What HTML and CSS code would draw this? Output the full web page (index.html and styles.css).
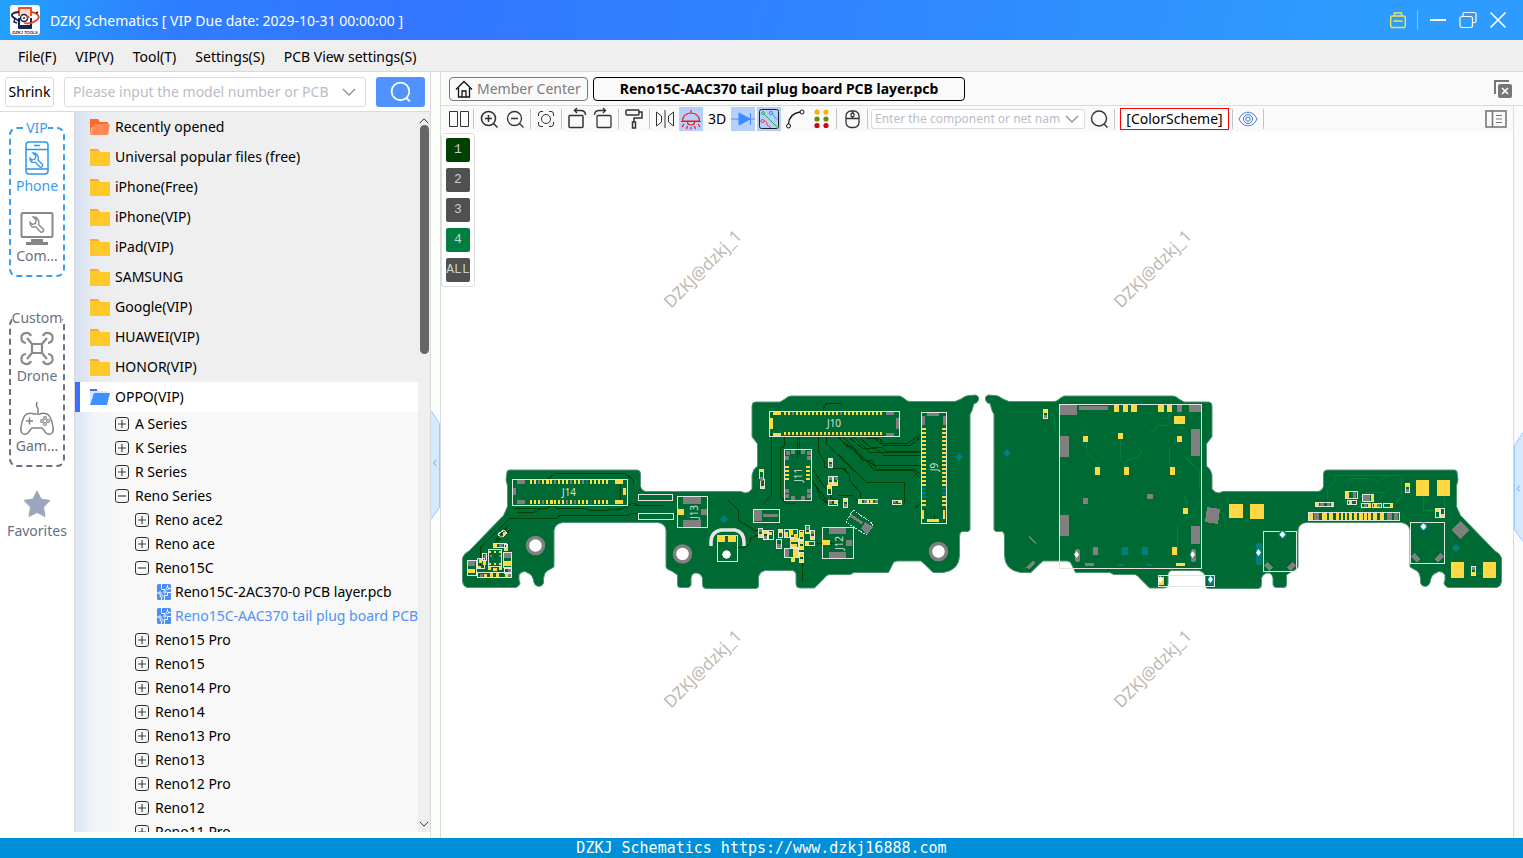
FILE: index.html
```html
<!DOCTYPE html>
<html lang="en">
<head>
<meta charset="utf-8">
<meta name="viewport" content="width=device-width, initial-scale=1">
<title>DZKJ Schematics</title>
<link rel="stylesheet" href="styles.css">
</head>
<body>
<svg class="sprite" aria-hidden="true">
  <symbol id="folder" viewBox="0 0 20 18"><path fill="#ffa82b" d="M0 1h8l2 3h10v4H0z"/><path fill="#ffc929" d="M0 3h8l1 1h11v14H0z"/></symbol>
  <symbol id="folder-recent" viewBox="0 0 20 18"><path fill="#ff6a2c" d="M0 1h8l2 3h8v5H2L0 16z"/><path fill="#ff8a58" d="M4 6h16l-2 11H0z"/></symbol>
  <symbol id="folder-open" viewBox="0 0 20 18"><path fill="#dbe5ff" d="M0 2h8l2 1h7v6H2L0 16z"/><path fill="#3c6cf0" d="M0 1h7v2H0z"/><path fill="#3d91ff" d="M4 5h16l-3 12H0z"/></symbol>
  <symbol id="plus" viewBox="0 0 14 14"><rect x=".5" y=".5" width="13" height="13" rx="2.5" fill="none" stroke="#333"/><path d="M3 7h8M7 3v8" stroke="#444" stroke-width="1.2"/></symbol>
  <symbol id="minus" viewBox="0 0 14 14"><rect x=".5" y=".5" width="13" height="13" rx="2.5" fill="none" stroke="#333"/><path d="M3 7h8" stroke="#444" stroke-width="1.2"/></symbol>
  <symbol id="pcb" viewBox="0 0 14 16"><rect width="14" height="16" rx="1.500" fill="#4a8ff8"/><path d="M4.500 0v4.500M4.500 5.500H8v3M10.500 1v3.500H14M0 9h3M4.500 13.500V16M7.500 16v-4.500h3V8.500H14" fill="none" stroke="#fff"/><g fill="#4a8ff8" stroke="#fff" stroke-width=".9"><circle cx="4.500" cy="12" r="1.400"/><circle cx="3" cy="9" r="1.200"/><circle cx="8" cy="8" r="1.200"/><circle cx="10.500" cy="4.500" r="1.200"/></g></symbol>
  <symbol id="chevron" viewBox="0 0 14 8"><path d="M1 1l6 6 6-6" fill="none" stroke="currentColor" stroke-width="1.4"/></symbol>
  <symbol id="search" viewBox="0 0 20 20"><circle cx="9.500" cy="9.500" r="8" fill="none" stroke="currentColor" stroke-width="1.6"/><path d="M14.500 15l3.500 3.500" stroke="currentColor" stroke-width="1.8"/></symbol>
  <symbol id="wrench" viewBox="0 0 16 16"><path d="M4 1l3 3-1 3-3 1-2-2c0 4 2 5 5 4l5 5c1 1 4-1 2-3l-4-4c1-4-1-7-5-7z" fill="none" stroke="currentColor" stroke-width="1.300"/></symbol>
</svg>

<header class="titlebar">
  <svg class="logo" viewBox="0 0 30 30" aria-label="DZKJ Tools" role="img">
    <rect width="30" height="30" rx="3" fill="#fff"/>
    <path d="M9 2h12q1 0 1 1v8H8V3q0-1 1-1z" fill="#f4491d"/><rect x="10" y="4" width="10" height="6" fill="#ffd9c4"/>
    <path d="M8 13h14v10q0 1-1 1H9q-1 0-1-1z" fill="#152450"/><rect x="10" y="10" width="10" height="10" fill="#fff"/>
    <circle cx="14" cy="13" r="3.500" fill="none" stroke="#16264e" stroke-width="1.500"/><circle cx="18" cy="12" r="1.600" fill="#e94121"/><circle cx="14" cy="13" r="1" fill="#16264e"/>
    <path d="M9 7C3 7 0 10 3 12c2 2 6 3 6 5" fill="none" stroke="#16264e" stroke-width="1.800"/>
    <path d="M21 7c7 1 10 5 6 8s-9 4-13 3" fill="none" stroke="#ee4721" stroke-width="1.800"/>
    <path d="M5 13l-1 4 3 1M26 8l2-1" fill="none" stroke="#16264e" stroke-width="1.400"/>
    <text x="15" y="28.500" text-anchor="middle" class="logo-text">DZKJ TOOLS</text>
  </svg>
  <h1 class="title">DZKJ Schematics [ VIP Due date: 2029-10-31 00:00:00 ]</h1>
  <button class="win-btn win-case" aria-label="Toolbox"><svg width="16" height="18" viewBox="0 0 16 18" fill="none" stroke="#f3e34b" stroke-width="1.400"><rect x=".7" y="5" width="14.600" height="11.500" rx="1.500"/><path d="M4.500 5V2h7v3M3.500 10h9"/></svg></button>
  <span class="win-line"></span>
  <button class="win-btn" aria-label="Minimize"><svg width="18" height="18" viewBox="0 0 18 18"><path d="M1 9h16" stroke="#fff" stroke-width="2"/></svg></button>
  <button class="win-btn" aria-label="Restore"><svg width="18" height="18" viewBox="0 0 18 18" fill="none" stroke="#fff" stroke-width="1.200"><rect x="1" y="5.500" width="12.500" height="11" rx="2"/><path d="M4 5V3q0-1.500 1.500-1.500h10q1.500 0 1.500 1.500v7q0 1.500-1.500 1.500H14"/></svg></button>
  <button class="win-btn" aria-label="Close"><svg width="18" height="18" viewBox="0 0 18 18"><path d="M1.500 1.500l15 15M16.500 1.500l-15 15" stroke="#fff" stroke-width="1.600"/></svg></button>
</header>

<nav class="menubar">
  <button>File(F)</button><button>VIP(V)</button><button>Tool(T)</button><button>Settings(S)</button><button>PCB View settings(S)</button>
</nav>

<div class="workspace">
  <aside class="side">
    <form class="finder">
      <button type="button" class="shrink">Shrink</button>
      <div class="combo">
        <input type="text" aria-label="Model number" placeholder="Please input the model number or PCB">
        <svg width="14" height="8"><use href="#chevron"/></svg>
      </div>
      <button type="button" class="find" aria-label="Search"><svg width="22" height="22"><use href="#search"/></svg></button>
    </form>
    <div class="side-body">
      <nav class="rail">
        <fieldset class="group group-vip">
          <legend>VIP</legend>
          <button class="rail-item"><svg width="36" height="36" viewBox="0 0 36 36" fill="none" stroke="#2b96ea" stroke-width="1.500"><rect x="7" y="2" width="22" height="32" rx="3"/><path d="M7 9.500h22M7 29h22M15 5.500h6"/><svg x="10" y="12" width="16" height="16" color="#2b96ea"><use href="#wrench"/></svg></svg><span>Phone</span></button>
          <button class="rail-item"><svg width="36" height="36" viewBox="0 0 36 36" color="#878787"><rect x="2.500" y="3" width="31" height="24" rx="1.500" fill="none" stroke="#878787" stroke-width="2"/><path d="M12 29h12v3h5v3H7v-3h5z" fill="#878787"/><svg x="10" y="6" width="17" height="17"><use href="#wrench"/></svg></svg><span>Com...</span></button>
        </fieldset>
        <fieldset class="group">
          <legend>Custom</legend>
          <button class="rail-item"><svg width="36" height="36" viewBox="0 0 36 36" fill="none" stroke="#8a8a8a" stroke-width="2.200"><path d="M12 6a5 5 0 1 0-5 7M24 6a5 5 0 1 1 5 7M12 31a5 5 0 1 1-5-7M24 31a5 5 0 1 0 5-7"/><path d="M8 8l5 6v9l-5 6M28 8l-5 6v9l5 6M13 14h10M13 23h10"/></svg><span>Drone</span></button>
          <button class="rail-item"><svg width="36" height="36" viewBox="0 0 36 36" fill="none" stroke="#828282" stroke-width="1.500"><path d="M19 13V9c0-2-3-2-1-7"/><path d="M8 14c3-1 5-1 7 0h6c2-1 4-1 7 0 3 1 5 7 6 13 1 6-2 8-5 7-3 0-3-4-6-6H13c-3 2-3 6-6 6-3 1-6-1-5-7 1-6 3-12 6-13z"/><path d="M7 21h7M10.500 17.500v7"/><g stroke-width="1.100"><circle cx="26" cy="18" r="1.400"/><circle cx="26" cy="24" r="1.400"/><circle cx="23" cy="21" r="1.400"/><circle cx="29" cy="21" r="1.400"/></g></svg><span>Gam...</span></button>
        </fieldset>
        <button class="rail-item rail-fav"><svg width="36" height="34" viewBox="0 0 36 34"><path d="M18 4l4 8 9 1.500-6.500 6.500L26 29.500 18 25.500 10 29.500 11.500 20 5 13.500 14 12z" fill="#9ba6bd" stroke="#9ba6bd" stroke-linejoin="round"/></svg><span>Favorites</span></button>
      </nav>
      <div class="tree">
        <ul class="folders">
          <li><button><svg><use href="#folder-recent"/></svg>Recently opened</button></li>
          <li><button><svg><use href="#folder"/></svg>Universal popular files (free)</button></li>
          <li><button><svg><use href="#folder"/></svg>iPhone(Free)</button></li>
          <li><button><svg><use href="#folder"/></svg>iPhone(VIP)</button></li>
          <li><button><svg><use href="#folder"/></svg>iPad(VIP)</button></li>
          <li><button><svg><use href="#folder"/></svg>SAMSUNG</button></li>
          <li><button><svg><use href="#folder"/></svg>Google(VIP)</button></li>
          <li><button><svg><use href="#folder"/></svg>HUAWEI(VIP)</button></li>
          <li><button><svg><use href="#folder"/></svg>HONOR(VIP)</button></li>
          <li><button class="open"><svg><use href="#folder-open"/></svg>OPPO(VIP)</button>
            <ul class="nodes">
              <li><button><svg><use href="#plus"/></svg>A Series</button></li>
              <li><button><svg><use href="#plus"/></svg>K Series</button></li>
              <li><button><svg><use href="#plus"/></svg>R Series</button></li>
              <li><button><svg><use href="#minus"/></svg>Reno Series</button>
                <ul>
                  <li><button><svg><use href="#plus"/></svg>Reno ace2</button></li>
                  <li><button><svg><use href="#plus"/></svg>Reno ace</button></li>
                  <li><button><svg><use href="#minus"/></svg>Reno15C</button>
                    <ul class="files">
                      <li><button><svg><use href="#pcb"/></svg>Reno15C-2AC370-0 PCB layer.pcb</button></li>
                      <li><button class="current"><svg><use href="#pcb"/></svg>Reno15C-AAC370 tail plug board PCB layer.pcb</button></li>
                    </ul>
                  </li>
                  <li><button><svg><use href="#plus"/></svg>Reno15 Pro</button></li>
                  <li><button><svg><use href="#plus"/></svg>Reno15</button></li>
                  <li><button><svg><use href="#plus"/></svg>Reno14 Pro</button></li>
                  <li><button><svg><use href="#plus"/></svg>Reno14</button></li>
                  <li><button><svg><use href="#plus"/></svg>Reno13 Pro</button></li>
                  <li><button><svg><use href="#plus"/></svg>Reno13</button></li>
                  <li><button><svg><use href="#plus"/></svg>Reno12 Pro</button></li>
                  <li><button><svg><use href="#plus"/></svg>Reno12</button></li>
                  <li><button><svg><use href="#plus"/></svg>Reno11 Pro</button></li>
                </ul>
              </li>
            </ul>
          </li>
        </ul>
        <div class="scroll">
          <svg class="up" width="10" height="6"><use href="#chevron"/></svg>
          <div class="track"><span class="thumb"></span></div>
          <svg width="10" height="6"><use href="#chevron"/></svg>
        </div>
      </div>
    </div>
  </aside>

  <button class="grip grip-left" aria-label="Collapse left panel"><svg width="9" height="110" viewBox="0 0 9 110"><path d="M0 .5l8.500 13v84L0 109.500" fill="#d6eaff" stroke="#94caff"/><path d="M5.500 50l-3 3 3 3" fill="none" stroke="#4aa5ee"/></svg></button>

  <main class="main">
    <div class="tabs">
      <button class="tab tab-home"><svg width="18" height="18" viewBox="0 0 18 18" fill="none" stroke="#111" stroke-width="1.300"><path d="M1 9.500L9 1.500l8 8M3.500 8v9h11V8M7 17v-6h4v6"/></svg>Member Center</button>
      <button class="tab tab-active">Reno15C-AAC370 tail plug board PCB layer.pcb</button>
      <button class="close-all" aria-label="Close all"><svg width="18" height="18" viewBox="0 0 18 18"><path d="M1 14V1h14" fill="none" stroke="#777" stroke-width="2"/><rect x="4" y="4" width="14" height="14" rx="2" fill="#777"/><path d="M8 8l6 6M14 8l-6 6" stroke="#fff" stroke-width="1.600"/></svg></button>
    </div>
    <div class="below">
      <div class="view">
        <div class="toolbar">
          <button class="tool" aria-label="Split view"><svg viewBox="0 0 24 24"><path d="M3.500 4.500h8v15h-8zM14.500 4.500h8v15h-8z"/></svg></button>
          <i class="sep"></i>
          <button class="tool" aria-label="Zoom in"><svg viewBox="0 0 24 24"><g stroke-width="1.600"><circle cx="11.500" cy="11.500" r="7"/><path d="M16.500 16.500l4 4M8 11.500h7M11.500 8v7"/></g></svg></button>
          <button class="tool" aria-label="Zoom out"><svg viewBox="0 0 24 24"><g stroke-width="1.300"><circle cx="11.500" cy="11.500" r="7"/><path d="M16.500 16.500l4 4M8 11.500h7"/></g></svg></button>
          <i class="sep"></i>
          <button class="tool" aria-label="Fit to view"><svg viewBox="0 0 24 24"><circle cx="12" cy="12" r="4.500"/><path d="M4.500 9V7q0-2.500 2.500-2.500h2M15 4.500h2q2.500 0 2.500 2.500v2M19.500 15v2q0 2.500-2.500 2.500h-2M9 19.500H7q-2.500 0-2.500-2.500v-2"/></svg></button>
          <i class="sep"></i>
          <button class="tool" aria-label="Rotate left"><svg viewBox="0 0 24 24"><g stroke-width="1.500"><rect x="4" y="8.500" width="14" height="12" rx="1"/><path d="M20.500 8c0-3-2-4.500-5-4.500H9.500M12 1L9.500 3.500 12 6"/></g></svg></button>
          <button class="tool" aria-label="Rotate right"><svg viewBox="0 0 24 24"><g stroke-width="1.300"><rect x="6" y="8.500" width="14" height="12" rx="1"/><path d="M3.500 8c0-3 2-4.500 5-4.500h6M12 1l2.500 2.500L12 6"/></g></svg></button>
          <i class="sep"></i>
          <button class="tool" aria-label="Paint"><svg viewBox="0 0 24 24"><g stroke-width="1.500"><rect x="4" y="3" width="13" height="5" rx="1"/><path d="M17 5h3v6h-8v4"/><rect x="10.500" y="15" width="3" height="6"/></g></svg></button>
          <i class="sep"></i>
          <button class="tool" aria-label="Mirror"><svg viewBox="0 0 24 24"><path d="M3.500 5v14l5-4V9zM20.500 5v14l-5-4V9zM12 3v18"/></svg></button>
          <button class="tool on" aria-label="Light"><svg viewBox="0 0 24 24"><g stroke="#f01818" stroke-width="1.200"><path d="M12 3v3M3.500 14c0-5 4-8 8.500-8s8.500 3 8.500 8zM2 14.500h20M8.500 15c0 4 7 4 7 0M5 17l-2 3M19 17l2 3M8.500 19l-1 3M12 20v2.500M15.500 19l1 3"/></g></svg></button>
          <button class="tool tool-3d">3D</button>
          <button class="tool on" aria-label="Diode"><svg viewBox="0 0 24 24"><path d="M0 12h24M19.500 6v12" stroke="#4a8ff8"/><path d="M8 6v12l11-6z" fill="#3d8bff" stroke="#3d8bff"/></svg></button>
          <button class="tool on" aria-label="Nets"><svg viewBox="0 0 24 24"><rect x="2.500" y="2.500" width="19" height="19" rx="2" stroke="#222"/><g stroke="#23b14d"><circle cx="6" cy="6" r="1.400"/><path d="M7 7l13 13"/></g><g stroke="#2e8bf5"><circle cx="14" cy="6" r="1.600"/><path d="M15.500 7c2 1 1 4 5 5"/></g><g stroke="#f33"><circle cx="5.500" cy="14" r="1.600"/><path d="M7 14c3 0 3 2 3 4 1 2 3 0 3 3"/></g></svg></button>
          <button class="tool" aria-label="Measure"><svg viewBox="0 0 24 24"><g stroke="#111"><circle cx="19" cy="5" r="2"/><circle cx="5.500" cy="19" r="2"/><path d="M17 5C10 6 6 10 5.500 17" stroke-width="1.300"/></g></svg></button>
          <button class="tool" aria-label="Pins"><svg viewBox="0 0 24 24" stroke="none"><g fill="#ffb000"><circle cx="8" cy="5" r="2.600"/><circle cx="17" cy="5" r="2.600"/></g><g fill="#6e8b00"><circle cx="8" cy="12" r="2.600"/><circle cx="17" cy="12" r="2.600"/></g><g fill="#cc0010"><circle cx="8" cy="18.500" r="2.600"/><circle cx="17" cy="18.500" r="2.600"/></g></svg></button>
          <i class="sep"></i>
          <button class="tool" aria-label="Mouse"><svg viewBox="0 0 24 24"><g stroke-width="1.300"><rect x="6" y="4" width="13" height="16.500" rx="5"/><path d="M6 11.500h13M12.500 4v2M12.500 9.500v2"/><rect x="11" y="6" width="3" height="4" rx="1.500"/></g></svg></button>
          <i class="sep"></i>
          <div class="combo combo-net">
            <input type="text" aria-label="Component or net name" placeholder="Enter the component or net name">
            <svg width="14" height="8"><use href="#chevron"/></svg>
          </div>
          <button class="tool" aria-label="Search board"><svg viewBox="0 0 24 24"><circle cx="12" cy="11.500" r="7.500" stroke-width="1.400"/><path d="M17 17l3.500 3.500" stroke-width="1.400"/></svg></button>
          <i class="sep"></i>
          <button class="scheme">[ColorScheme]</button>
          <i class="sep"></i>
          <button class="tool" aria-label="Show"><svg viewBox="0 0 24 24"><g stroke="#3f78dd"><path d="M3 12c4-9 14-9 18 0-4 9-14 9-18 0z"/><circle cx="12" cy="12" r="4.500"/><circle cx="12" cy="12" r="2.200"/></g></svg></button>
          <i class="sep"></i>
          <button class="tool tool-end" aria-label="Side panel"><svg viewBox="0 0 24 24"><g stroke="#777" stroke-width="1.600"><rect x="2" y="4" width="20" height="16"/><path d="M8.500 4v16"/><path d="M12 8.500h6M12 12h6M12 15.500h6" stroke-width="1.200"/></g></svg></button>
        </div>

        <div class="canvas">
          <svg class="board" viewBox="441 132 1072 706" role="img" aria-label="Board layout">
            <g class="mark">
              <text transform="translate(671 309) rotate(-45)">DZKJ@dzkj_1</text>
              <text transform="translate(1121 309) rotate(-45)">DZKJ@dzkj_1</text>
              <text transform="translate(671 709) rotate(-45)">DZKJ@dzkj_1</text>
              <text transform="translate(1121 709) rotate(-45)">DZKJ@dzkj_1</text>
            </g>
            <path id="outline" class="pcb" d="M507 472q0-2 3-2H637q3.500 0 3.500 4V486q1 5 6 5.500H741l4 1.500q4 0 7-4V475q1-6 5.500-9V444l-5.500-7.500V406q0-4 3.500-4H780l5-3q3-3 6-3H900q4 2 6 4 2 1.500 4 1.500H955q6-2 10-5 2-1 5-1l6-.5 2.500 2v3l-2 3-2.500.5-2 7-2 4V530l-2 1.500h-6q-2.500 1-2.500 5V555q0 15-16 17.500H933l-7-7-5-4.500H897q-3 0-4 2.500l-4.500 9H854l-3.500 2H829q-3 1-5 4l-9.500 9.500H800q-4 0-4-4V574q-1-3.500-4-3.500H765q-5 1-6.500 6V586q0 2.500-3 2.500H706q-3.500 0-3.500-4V578q-2-5-6.500-5-4 0-5 5v7q-1 2.500-3 2.500h-8q-2.500 0-2.500-3V575l-6-4q-5-1.500-5.500-4V530q-1-7-9-7.500H563q-8 1-9 8V567l-7 4q-3 2-3.500 8v4q-1 3.500-5 3.500-4-1-4.500-4-1-7-5-9l-4-2q-5 0-6 4v4l1 4q-1 3-4 4H467q-4-1-4.500-6V558q1-4 7-7.500l34-35 4-9V486l-1.500-6z"/>
            <use href="#outline" transform="translate(1964 0) scale(-1 1)"/>

            <g class="trace">
              <path d="M509 518h48l4-3h68l4-2h44M515 508h32l5-4 4 4h25l8 2h20l12-1 12-6 5 2h26M517 512h18l5-3M634 505h24M480 548l30-30M545 482l10-9h70l8 7v4M620 481v20M495 541l14-16M512 528l-18 16M480 546v20"/>
              <path d="M771 434v62l-7 7M784 436v10l-4 3v47l6 7h9M823 415v-6l4-6h14M797 458v-20M800 455l-1-17M818 436v15l6 10v6l8 1h12l5 7v5l11 12v6M832 468h10l6 6M813 470l12 18 5 4v5l10 6M810 478l13 17 4 7h10M815 485l6 13 7 6M826 436v7l40 39h38v21M838 436l8 10h6l10 14h5l6 5h44l7 2M842 436l22 22 10 12h38l8 8M844 442l20 18h8l4 9h37l10 7M850 438l12 10h13l8 7h38M853 436l16 16h26l28 .5M860 438l10 9h12l4 4h35M866 438h8l9 7h28l10-8M870 438h8l6 5h24l13-8M728 500l10 10v10l16 10h8M735 547q14 4 16-9l9-4h10M802 540v42M838 495h14l6 6M934 515v10M915 508l9-7M840 543h-23"/>
            </g>
            <g class="silk">
              <path d="M512.500 479.500h115v26h-115zM769.500 411.500h130v25h-130zM921.500 412.500h25v111h-25zM784.500 449.500h27v51h-27zM638.500 494.500h34v6h-34zM638.500 513.500h35v6h-35zM677.500 496.500h30v31h-30zM753.500 509.500h26v13h-26zM822.500 527.500h31v31h-31zM717.500 535.500h20v26h-20z"/>
              <path stroke-dasharray="2 1" d="M853 510l20 14-7 11-20-13z"/>
            </g>
            <path d="M711 546v-4q0-10 10-12h14q9 2 9 12v4" fill="none" stroke="#e6e6e6" stroke-width="3.500"/>

            <g class="y" stroke-width="4">
              <path stroke-dasharray="2 2" d="M530 482h80M530 502h80"/>
              <path d="M546 482h3M550 502h3M615 482h8M615 502h8"/>
            </g>
            <g class="y" stroke-width="3"><path stroke-dasharray="2 2" d="M784 413.500h99M784 433.500h99"/><path d="M773 413.500h8M773 434.500h8M771 418v11M927 520.500h12"/></g>
            <g class="y" stroke-width="4"><path stroke-dasharray="2 2" d="M924 428v79M944 428v79"/><path d="M923 510v9M944 510v9" stroke-width="2"/></g>
            <path class="g" stroke-width="4" d="M538 482h2M554 482h2M570 482h2M582 482h2M542 502h2M566 502h2M574 502h2M590 502h2M517 482h8M517 502h8"/>
            <path class="t" stroke-width="4" d="M586 482h2M590 502h2"/>
            <path class="g" stroke-width="3" d="M886 413.500h8M886 434.500h8M897.500 418v11M927 414.500h12M923.500 416v9M944.500 416v9M792 413.500h2M840 413.500h2M514.500 488v7"/>
            <path class="t" stroke-width="4" stroke-dasharray="2 2" d="M924 488v12M944 488v8"/>
            <path class="y" stroke-width="3" d="M624.500 488v7"/>
            <g class="y" stroke-width="4"><path stroke-dasharray="2 2" d="M787 466v15M808 466v15"/></g>
            <path class="g" stroke-width="4" d="M786 453h4M791 452h4M801 452h4M807 453h4M785 458h4M807 458h4M785 491h4M807 491h4M785 496h4M791 498h4M801 498h4M807 496h4"/>
            <path class="gf" d="M683 497h18v7h-18zM683 520h18v7h-18zM701 509h6v6h-6zM754 510h8v11h-8zM763 514h15v3h-15zM829 528h17v6h-17zM829 552h17v6h-17zM846 540h6v6h-6z"/>
            <path class="gf" d="M865 522l8 5-6 8-6-6zM851 514l12 8-2 2-12-8z"/>
            <path class="yf" d="M677 509h7v6h-7zM822 540h8v5h-8zM717 535h8v7h-8zM728 535h8v7h-8z"/>
            <path class="tf" d="M724 515l4 4-4 4-4-4zM959 453l4 4-4 4-4-4z"/>

            <g class="silk">
              <path d="M467.500 560.500h9v15h-9zM488.500 549.500h13v17h-13zM503.500 552.500h8v15h-8zM493.500 543.500h13v4h-13zM477.500 558.500h7v10h-7zM477.500 572.500h34v5h-34zM504.500 568.500h7v5h-7zM504.500 544.500h3v6h-3zM482.500 553.500h4v7h-4z"/>
              <path d="M498 534l6-4 3 3-6 5zM759.500 469.500h4v9h-4zM760.500 479.500h4v9h-4zM828.500 458.500h4v9h-4zM828.500 476.500h4v9h-4zM833.500 476.500h4v9h-4zM827.500 485.500h4v9h-4zM828.500 500.500h9v5h-9zM843.500 498.500h4v9h-4zM858.500 499.500h9v4h-9zM868.500 499.500h9v4h-9zM892.500 500.500h9v4h-9z"/>
              <path d="M758.500 528.500h4v9h-4zM763.500 530.500h4v9h-4zM768.500 530.500h5v9h-5zM776.500 539.500h5v9h-5zM778.500 529.500h4v8h-4zM784.500 529.500h5v8h-5zM790.500 529.500h7v8h-7zM799.500 530.500h4v9h-4zM805.500 525.500h4v8h-4zM810.500 530.500h4v9h-4zM784.500 548.500h14v9h-14zM790.500 538.500h8v9h-8zM799.500 540.500h4v9h-4zM799.500 552.500h4v10h-4zM805.500 541.500h9v4h-9z"/>
            </g>
            <path class="yf" d="M468 569h7v4h-7zM504 561h7v5h-7zM494 544h3v3h-3zM505 548h3v3h-3zM479 559h3v4h-3zM483 561h3v4h-3zM478 566h3v2h-3zM484 574h3v3h-3zM490 573h3v4h-3zM496 573h3v4h-3zM488 567h3v3h-3zM493 568h4v3h-4zM499 567h3v3h-3zM505 574h3v3h-3zM489 551h2v2h-2zM494 551h2v2h-2zM499 551h2v2h-2zM489 563h2v2h-2zM494 563h2v2h-2zM499 563h2v2h-2zM503 532h3v3h-3z"/>
            <path class="gf" d="M468 561h7v5h-7zM504 553h7v5h-7zM499 544h4v3h-4zM499 555h2v2h-2zM490 555h2v2h-2zM508 569h3v3h-3zM480 574h3v3h-3zM508 574h3v3h-3zM484 555h2v3h-2zM499 536h3v2h-3z"/>
            <path class="yf" d="M760 469h3v3h-3zM761 486h3v2h-3zM829 459h3v3h-3zM829 482h3v3h-3zM834 482h3v3h-3zM828 486h3v3h-3zM834 501h3v3h-3zM844 499h3v3h-3zM859 500h3v3h-3zM870 500h3v3h-3zM898 501h3v2h-3zM759 534h3v3h-3zM764 531h3v3h-3zM769 532h3v3h-3zM779 530h3v3h-3zM785 532h3v5h-3zM790 530h3v5h-3zM794 534h4v5h-4zM790 539h8v3h-8zM791 544h6v3h-6zM793 549h5v8h-5zM800 532h4v5h-4zM800 541h4v3h-4zM800 546h4v3h-4zM800 553h4v4h-4zM791 558h4v4h-4zM806 532h3v2h-3zM811 536h3v3h-3zM806 542h3v3h-3zM800 559h3v3h-3z"/>
            <path class="gf" d="M760 477h3v4h-3zM829 464h3v3h-3zM829 477h3v3h-3zM835 477h3v3h-3zM829 501h3v3h-3zM844 504h3v3h-3zM864 500h3v3h-3zM875 500h3v3h-3zM893 501h3v2h-3zM759 529h3v3h-3zM764 536h3v3h-3zM777 544h4v4h-4zM785 549h4v8h-4zM806 527h3v3h-3zM811 531h3v3h-3z"/>
            <g fill="#fff" stroke="#808080" stroke-width="3.500"><circle cx="535.500" cy="545.500" r="8"/><circle cx="682.500" cy="554" r="8"/><circle cx="938.500" cy="551.500" r="8"/></g>
            <circle cx="726.500" cy="554.500" r="4" fill="#fff"/><path d="M726.500 550v9M722 554.500h9" stroke="#fff"/>
            <g class="ref">
              <text x="569" y="496">J14</text><text x="834" y="427">J10</text>
              <text transform="translate(938 467) rotate(-90)">J9</text>
              <text transform="translate(802 475) rotate(-90)">J11</text>
              <text transform="translate(843 543) rotate(-90)">J12</text>
              <text transform="translate(698 512) rotate(-90)">J13</text>
            </g>

            <g class="trace trace-b">
              <path d="M1050 411l4 5v14M1086 442v10l11 11v8M1120 438v21l6 6v5M1125 463l6-5h6l3-4v-4l-3-3M1176 442l-7 7v14l3 3M1183 455l16 15v17M1175 419l-6 6h-12l-3 6-4 1M1173 411l-6 7h-5M1184 496l2 3v20l-9 9v28l4 4v5M1423 496v14h13M1444 496v16M1477 573h6M1327 498v-8l7-7v-8h64l3 3v20l-8 8h-38l-6 8M1345 484l6-6h19l8 4 10-6M1360 498l6-6h18M1360 500v14M1390 488l-12 12"/>
            </g>
            <g class="silk"><path d="M1059.500 404.500h142v164h-142zM1158.500 575.500h56v11h-56zM1043.500 409.500h4v9h-4zM1263.500 531.500h33v40h-33zM1410.500 522.500h34v41h-34zM1308.500 512.500h91v8h-91zM1345.500 491.500h12v7h-12zM1362.500 494.500h11v7h-11zM1315.500 502.500h18v4h-18zM1347.500 500.500h9v4h-9zM1361.500 503.500h9v4h-9zM1372.500 503.500h9v4h-9zM1383.500 503.500h9v4h-9zM1405.500 483.500h4v9h-4zM1435.500 508.500h4v9h-4zM1440.500 508.500h4v9h-4zM1471.500 566.500h4v9h-4z"/></g>
            <path class="gf" d="M1060 405h17v10h-17zM1079 406h29v4h-29zM1060 436h9v21h-9zM1191 429h9v27h-9zM1060 515h9v21h-9zM1191 526h9v18h-9zM1189 405h12v7h-12zM1177 405h5v7h-5zM1083 498h5v6h-5zM1147 494h6v5h-6zM1093 547h5v8h-5zM1085 563h9v3h-9zM1207 507l13 2-2 15-13-2zM1044 415h3v3h-3zM1460 521l9 9-8 9-10-9zM1314 513h5v7h-5zM1387 513h5v7h-5zM1394 513h4v7h-4zM1353 492h3v6h-3zM1363 495h7v6h-7zM1320 503h4v3h-4zM1327 503h3v3h-3zM1406 489h3v3h-3zM1472 567h3v3h-3zM1364 504h3v3h-3zM1377 504h3v3h-3zM1029 536l7 7-1 1-7-7zM1027 566l6-5 2 2-6 6-3-1z"/>
            <g class="g" stroke-width="5"><path d="M1265.500 564l6 5M1288.500 569l6-5M1413 555l6 6M1436 561l6-6"/></g>
            <path class="g" stroke-linecap="round" stroke-width="5" d="M1077.500 551.500v8M1193.500 551.500v8"/>
            <path class="t" stroke-linecap="round" stroke-width="6" d="M1259 546v16"/>
            <path class="yf" d="M1114 405h5v7h-5zM1123 405h5v7h-5zM1131 405h6v7h-6zM1158 405h6v7h-6zM1167 405h5v7h-5zM1174 416h11v8h-11zM1083 436h5v6h-5zM1118 433h5v6h-5zM1177 436h5v6h-5zM1095 467h5v8h-5zM1124 467h5v8h-5zM1170 467h5v8h-5zM1183 508h5v6h-5zM1172 547h5v8h-5zM1176 563h9v3h-9zM1229 504h14v14h-14zM1250 504h14v15h-14zM1416 480h13v16h-13zM1437 480h13v16h-13zM1451 562h13v16h-13zM1483 562h13v16h-13zM1044 410h3v3h-3zM1159 577h5v8h-5zM1346 492h3v6h-3zM1371 495h3v6h-3zM1406 484h3v3h-3zM1436 509h3v3h-3zM1441 514h3v3h-3zM1472 572h3v3h-3zM1316 503h3v3h-3zM1331 503h3v3h-3zM1349 501h3v3h-3zM1368 504h3v3h-3zM1374 504h3v3h-3zM1390 504h3v3h-3zM1309 513h4v7h-4zM1322 513h5v7h-5zM1329 513h4v7h-4z"/>
            <path class="yf" d="M1336 513h3v7h-3zM1341 513h2v7h-2zM1345 513h2v7h-2zM1349 513h3v7h-3zM1354 513h3v7h-3zM1359 513h4v7h-4zM1364 513h3v7h-3zM1368 513h3v7h-3zM1373 513h4v7h-4zM1380 513h4v7h-4z"/>
            <path class="tf" d="M1122 547h6v8h-6zM1142 547h6v8h-6zM1117 566q4-5 8 0zM1145 566q4-5 8 0zM1007 449l4 4-4 4-4-4zM1456 544l4 4-4 4-4-4zM1208 576h6v9h-6z"/>
            <circle class="tf" cx="1282.500" cy="534.500" r="4"/><circle class="tf" cx="1423.500" cy="526.500" r="4"/>
            <path fill="#fff" d="M1282.500 531l3 3.500-3 3.500-3-3.500zM1423.500 523l3 3.500-3 3.500-3-3.500zM1258.500 549l2.500 3.500-2.500 3.500-2.500-3.500zM1076.500 551l2.500 3.500-2.500 3.500-2.500-3.500zM1192.500 551l2.500 3.500-2.500 3.500-2.500-3.500zM1210.500 576l2.500 3.500-2.500 3.500-2.500-3.500zM1160.500 576l2.500 3.500-2.500 3.500-2.500-3.500z"/>
          </svg>
          <div class="layers">
            <button class="layer-top">1</button><button>2</button><button>3</button><button class="layer-bottom">4</button><button>ALL</button>
          </div>
        </div>
      </div>
      <button class="grip grip-right" aria-label="Expand right panel"><svg width="9" height="110" viewBox="0 0 9 110"><path d="M9 .5L.5 13.500v84L9 109.500" fill="#d6eaff" stroke="#94caff"/><path d="M6 53.500l-3 3 3 3" fill="none" stroke="#4aa5ee"/></svg></button>
    </div>
  </main>
</div>

<footer class="status">DZKJ Schematics https://www.dzkj16888.com</footer>
</body>
</html>
```

FILE: styles.css
```css
* { box-sizing: border-box; }
html, body { height: 100%; }
body {
  margin: 0;
  display: flex;
  flex-direction: column;
  overflow: hidden;
  background: #fff;
  color: #000;
  font: 14px/20px "Noto Sans", "Open Sans", sans-serif;
}
button, input { font: inherit; color: inherit; }
button { margin: 0; padding: 0; border: 0; background: none; white-space: nowrap; }
ul { margin: 0; padding: 0; list-style: none; }
svg { display: block; flex: none; }
.sprite { position: absolute; width: 0; height: 0; }

/* Title bar */
.titlebar {
  flex: none;
  display: flex;
  align-items: center;
  height: 40px;
  padding: 0 10px;
  color: #fff;
  background: linear-gradient(100deg, #22a2fd 0, #2f7eff 11%, #3375ff 26%, #2f88ff 60%, #2e9cfe 90%);
}
.logo { width: 30px; height: 30px; }
.logo-text { font: italic bold 4px "Liberation Sans", sans-serif; fill: #1a2850; }
.title { margin: 0 auto 0 10px; padding-top: 2px; font-size: 14px; font-weight: 400; }
.win-btn { display: grid; place-items: center; width: 30px; height: 30px; }
.win-case { margin-right: 4px; }
.win-line { width: 1px; height: 20px; margin-right: 5px; background: #7cc1ff; }

/* Menu bar */
.menubar {
  flex: none;
  display: flex;
  gap: 19px;
  height: 32px;
  padding: 2px 18px 0;
  background: #efefef;
  border-bottom: 1px solid #dadada;
}

.workspace { flex: 1; display: flex; min-height: 0; }

/* Left panel */
.side { flex: none; display: flex; flex-direction: column; width: 431px; border-right: 1px solid #dadada; }
.finder {
  flex: none;
  display: flex;
  align-items: center;
  height: 40px;
  padding: 0 5px;
  border-bottom: 1px solid #dadada;
}
.shrink { width: 49px; height: 30px; margin-right: 10px; border: 1px solid #dcdcdc; border-radius: 3px; }
.combo {
  flex: 1;
  display: flex;
  align-items: center;
  min-width: 0;
  height: 30px;
  padding: 0 9px 0 8px;
  gap: 8px;
  color: #8f949c;
  background: #fff;
  border: 1px solid #dcdcdc;
  border-radius: 3px;
}
.combo input { flex: 1; min-width: 0; padding: 0; border: 0; outline: 0; background: none; color: #000; }
.combo input::placeholder { color: #b9bdc6; opacity: 1; }
.find { display: grid; place-items: center; width: 49px; height: 30px; margin-left: 10px; border-radius: 3px; background: #5093ff; color: #fff; }

.side-body { flex: 1; display: flex; min-height: 0; padding-bottom: 6px; }
.rail { flex: none; width: 75px; padding-top: 6px; border-right: 1px solid #dadada; color: #687080; }
.group {
  min-width: 0;
  margin: 0 9px 31px;
  padding: 2px 0 9px;
  border: 2px dashed #687080;
  border-radius: 8px;
  display: flex;
  flex-direction: column;
  gap: 14px;
}
.group + .group { margin-bottom: 20px; }
.group-vip { border-color: #3a9cf2; }
.group legend { margin: 0 auto; padding: 0; }
.group-vip legend, .group-vip .rail-item:first-of-type { color: #3a9cf2; }
.rail-item { display: flex; flex-direction: column; align-items: center; width: 100%; }

.tree {
  flex: 1;
  display: flex;
  min-width: 0;
  background: linear-gradient(90deg, #d5e0f2 0, #e8ebf1 18px, #efefef 44px);
}
.folders { flex: 1; min-width: 0; overflow: hidden; }
.folders button { display: flex; align-items: center; width: 100%; line-height: 22px; text-align: left; }
.folders > li > button { height: 30px; padding-left: 15px; gap: 5px; }
.folders > li > button svg { width: 20px; height: 18px; }
.folders > li > button.open { padding-left: 10px; border-left: 5px solid #3b6efc; background: #fff; }
.nodes { background: linear-gradient(90deg, #dbe5f5 0, #f0f3f8 18px, #f8f8f8 44px); padding-left: 40px; }
.nodes button { height: 24px; gap: 6px; }
.nodes button svg { width: 14px; height: 14px; }
.nodes ul { padding-left: 20px; }
.nodes .files { padding-left: 22px; }
.files button { gap: 4px; }
.nodes .files svg { height: 16px; }
.files .current { color: #4f92f5; }

.scroll { flex: none; display: flex; flex-direction: column; align-items: center; width: 12px; padding: 6px 0 5px; gap: 1px; color: #333; background: #efefef; }
.scroll .up { transform: rotate(180deg); }
.track { flex: 1; width: 9px; }
.thumb { display: block; height: 33%; border-radius: 5px; background: #666; }

/* Panel handles */
.grip { flex: none; display: flex; align-items: flex-start; width: 9px; }
.grip-left { padding-top: 338px; background: #fafffa; }
.grip-right { padding-top: 326px; background: #fafafa; }

/* Main area */
.main { flex: 1; display: flex; flex-direction: column; min-width: 0; border-left: 1px solid #dadada; }
.tabs {
  flex: none;
  display: flex;
  align-items: center;
  gap: 5px;
  height: 34px;
  padding: 0 11px 0 8px;
  background: #fafafa;
  border-bottom: 1px solid #dadada;
}
.tab { display: flex; align-items: center; justify-content: center; height: 24px; border: 1px solid #777; border-radius: 4px; color: #7c7c7c; }
.tab-home { padding: 0 6px 0 5px; gap: 4px; }
.tab-active { padding: 0 26px; border-color: #000; color: #000; font-weight: 700; }
.close-all { margin-left: auto; }
.below { flex: 1; display: flex; min-height: 0; }
.view { flex: 1; display: flex; flex-direction: column; min-width: 0; border-right: 1px solid #dadada; }
.toolbar { flex: none; display: flex; align-items: center; gap: 2px; height: 26px; padding: 0 5px; background: #fafafa; }
.tool { flex: none; width: 24px; height: 24px; }
.tool svg { width: 24px; height: 24px; fill: none; stroke: #333; }
.tool svg[stroke="none"] { stroke: none; }
.tool.on { background: #b6d0fb; }
.tool-end { margin-left: auto; }
.sep { flex: none; width: 1px; height: 20px; margin: 0 1px; background: #c4c4c4; }
.combo-net { flex: 0 1 214px; height: 20px; padding: 0 5px 0 3px; gap: 5px; font-size: 12px; }
.scheme { width: 109px; height: 22px; margin-left: 2px; border: 1px solid #f00; background: #fff; }

.canvas { flex: 1; position: relative; min-height: 0; background: #fff; }
.board { width: 100%; height: 100%; }
.layers {
  position: absolute;
  top: 1px;
  left: 0;
  display: flex;
  flex-direction: column;
  gap: 6px;
  padding: 4px;
  background: #fff;
  border: 1px solid #dedede;
  border-radius: 3px;
}
.layers button {
  width: 24px;
  height: 24px;
  border-radius: 2px;
  background: #505050;
  color: #ccc;
  font: 13px/24px "Liberation Mono", monospace;
}
.layers .layer-top { background: #004000; }
.layers .layer-bottom { background: #008040; }

/* Board drawing */
.pcb { fill: #006a35; stroke: #4c9670; stroke-width: 1; }
.trace { fill: none; stroke: #004000; stroke-width: 1; }
.trace-b { stroke: #008040; }
.silk { fill: none; stroke: #e0e6e0; stroke-width: 1; }
.y { fill: none; stroke: #ffd942; }
.g { fill: none; stroke: #808080; }
.t { fill: none; stroke: #007f80; }
.yf { fill: #ffd942; }
.gf { fill: #808080; }
.tf { fill: #007f80; }
.trace, .silk, .y, .g, .t, .yf, .gf { shape-rendering: crispEdges; }
.ref { font: 10px "Noto Sans", sans-serif; fill: #d3e4da; text-anchor: middle; }
.mark { font: 17px "Noto Sans", sans-serif; fill: #bdbab0; }

.status {
  flex: none;
  height: 20px;
  background: #0090da;
  color: #fff;
  text-align: center;
  font: 15px/20px "DejaVu Sans Mono", monospace;
}
```
